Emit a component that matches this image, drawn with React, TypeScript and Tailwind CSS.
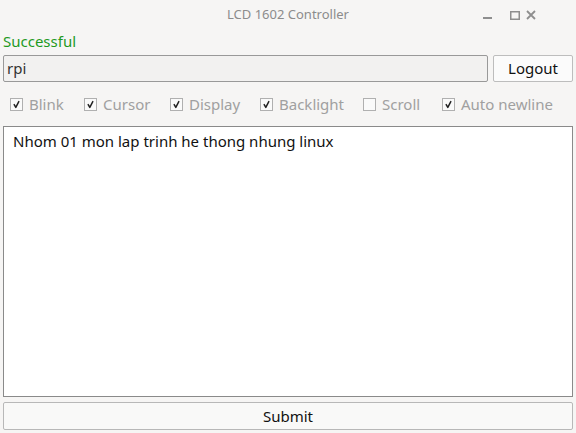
import React, { useState } from "react";

const font = { fontFamily: '"Noto Sans", "DejaVu Sans", sans-serif' };

type Opt = { label: string; checked: boolean; w: string };

const initialOpts: Opt[] = [
  { label: "Blink", checked: true, w: "w-[74px]" },
  { label: "Cursor", checked: true, w: "w-[86px]" },
  { label: "Display", checked: true, w: "w-[90px]" },
  { label: "Backlight", checked: true, w: "w-[103px]" },
  { label: "Scroll", checked: false, w: "w-[79px]" },
  { label: "Auto newline", checked: true, w: "w-auto" },
];

function Check({ on }: { on: boolean }) {
  return (
    <span className="flex h-[13px] w-[13px] shrink-0 items-center justify-center border border-[#b0b0b0] bg-[#fafafa]">
      {on && (
        <svg width="9" height="9" viewBox="0 0 9 9">
          <path d="M2.2 4.6 L3.8 7.4 L6.8 1.6" fill="none" stroke="#222" strokeWidth="1.5" strokeLinecap="round" strokeLinejoin="round" />
        </svg>
      )}
    </span>
  );
}

export default function App() {
  const [opts, setOpts] = useState(initialOpts);
  const [text, setText] = useState("Nhom 01 mon lap trinh he thong nhung linux");

  return (
    <div className="flex h-[433px] w-[576px] flex-col bg-[#f6f5f4] text-[15px]" style={font}>
      {/* title bar */}
      <div className="grid h-[30px] shrink-0 grid-cols-[1fr_auto_1fr] items-center">
        <div />
        <div className="text-[13px] text-[#8c8c8c]">LCD 1602 Controller</div>
        <div className="flex items-center justify-end pr-[40px]">
          <svg width="9" height="10" viewBox="0 0 9 10">
            <rect x="0" y="7" width="9" height="2" fill="#8e8e8e" />
          </svg>
          <svg width="10" height="10" viewBox="0 0 10 10" className="ml-[18px]">
            <rect x="0.75" y="1.75" width="8.5" height="7.5" fill="none" stroke="#8e8e8e" strokeWidth="1.5" />
          </svg>
          <svg width="10" height="10" viewBox="0 0 10 10" className="ml-[6px]">
            <path d="M1 1 L9 9 M9 1 L1 9" stroke="#8e8e8e" strokeWidth="1.8" />
          </svg>
        </div>
      </div>

      <div className="flex flex-1 flex-col px-[3px]">
        <div className="h-[25px] leading-[22px] text-[#1f9a1f]">Successful</div>

        <div className="flex h-[27px] gap-[5px]">
          <input
            className="min-w-0 flex-1 rounded-[2px] border border-[#999] bg-[#f2f1f0] px-[3px] text-[15px] text-[#333] outline-none"
            style={font}
            defaultValue="rpi"
          />
          <button className="w-[80px] rounded-[2px] border border-[#bdbdbd] bg-[#fbfbfb] text-[15px] text-[#111]">
            Logout
          </button>
        </div>

        <div className="flex h-[44px] items-center pl-[7px]">
          {opts.map((o, i) => (
            <label
              key={o.label}
              className={`flex shrink-0 cursor-pointer items-center gap-[6px] text-[#a0a0a0] ${o.w}`}
              onClick={() =>
                setOpts(opts.map((p, j) => (j === i ? { ...p, checked: !p.checked } : p)))
              }
            >
              <Check on={o.checked} />
              <span>{o.label}</span>
            </label>
          ))}
        </div>

        <textarea
          className="h-[271px] resize-none border border-[#8a8a8a] bg-white px-[9px] py-[4px] text-[15px] leading-[20px] text-[#111] outline-none"
          style={font}
          value={text}
          onChange={(e) => setText(e.target.value)}
        />

        <button className="mt-[5px] h-[28px] rounded-[2px] border border-[#b8b8b8] bg-[#f9f9f8] text-[15px] text-[#111]">
          Submit
        </button>
      </div>
    </div>
  );
}
